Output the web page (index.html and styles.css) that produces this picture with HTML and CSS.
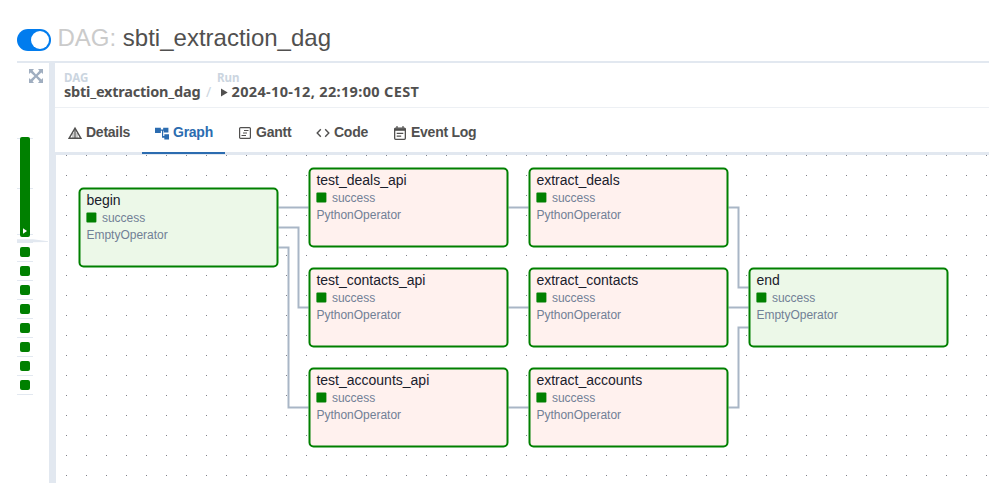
FILE: index.html
```html
<!DOCTYPE html>
<html lang="en">
<head>
<meta charset="utf-8">
<title>sbti_extraction_dag</title>
<link rel="stylesheet" href="styles.css">
</head>
<body>
<header class="page-header">
  <span class="switch"><span class="knob"></span></span>
  <h1><span class="muted">DAG:</span> sbti_extraction_dag</h1>
</header>
<div class="main">
  <aside class="runs">
    <svg class="expand" width="14" height="14" viewBox="0 0 14 14" fill="#a0aec0"><path d="M0 0h5L3.6 1.7 7 5.6 10.4 1.7 9 0h5v5l-1.6-1.4L8.6 7l3.8 3.4L14 9v5H9l1.4-1.7L7 8.4l-3.4 3.9L5 14H0V9l1.6 1.4L5.4 7 1.6 3.6 0 5z"/></svg>
    <div class="chart">
      <div class="bar"><svg width="4" height="6" viewBox="0 0 4 6"><path d="M0 0.3 4 3 0 5.7z" fill="#fff"/></svg></div>
    </div>
    <svg class="taper" width="31" height="5" viewBox="0 0 31 5"><path d="M0 0.2H16L31 2.3V3L16 3.2V4H0z" fill="#e2e8f0"/></svg>
    <ul class="tasks">
      <li></li><li></li><li></li><li></li><li></li><li></li><li></li><li></li>
    </ul>
  </aside>
  <section class="panel">
    <nav class="crumbs">
      <div class="crumb dag"><span class="label">DAG</span><span class="value">sbti_extraction_dag</span></div>
      <span class="slash">/</span>
      <div class="crumb run"><span class="label">Run</span><span class="value"><svg width="8" height="9" viewBox="0 0 8 9"><path d="M1 0.5 7.7 4.5 1 8.5z" fill="#51504f"/></svg><span class="date">2024-10-12, 22:19:00 CEST</span></span></div>
    </nav>
    <div class="tabs">
      <div class="tab details"><svg width="14" height="14" viewBox="0 0 14 14" fill="none" stroke="#51504f" stroke-width="1.4"><path d="M7 2.2 12.8 12.2H1.2z"/><path d="M7 3v9" stroke-width="1.3"/><path d="M5 7v5M9 7v5" stroke-width=".6"/></svg><span>Details</span></div>
      <div class="tab graph active"><svg width="14" height="14" viewBox="0 0 24 24" fill="#2b6cb0"><path d="M23 11V3h-9v3H10V3H0v9h10V8h2v12h4v3h8v-9h-8v3h-2V8h1v3z"/></svg><span>Graph</span></div>
      <div class="tab gantt"><svg width="12" height="12" viewBox="0 0 12 12" fill="none" stroke="#51504f" stroke-width="1.2"><rect x=".6" y=".6" width="10.8" height="10.8" rx="1"/><path d="M5 3.5h4.5M4 6h4M2.5 8.5H7" stroke-width="1.1"/></svg><span>Gantt</span></div>
      <div class="tab code"><svg width="14" height="10" viewBox="0 0 14 10" fill="none" stroke="#51504f" stroke-width="1.4"><path d="M4.8 1.3 1.2 5l3.6 3.7M9.2 1.3 12.8 5 9.2 8.7"/></svg><span>Code</span></div>
      <div class="tab log"><svg width="12" height="14" viewBox="0 0 12 14" fill="none" stroke="#51504f" stroke-width="1.3"><rect x=".65" y="2.1" width="10.7" height="11.2" rx="1"/><path d="M.7 3.6h10.6" stroke-width="2.4"/><path d="M3 0v2M9 0v2M2.7 7.4h6.6M2.7 10.2h4.5" stroke-width="1.2"/></svg><span>Event Log</span></div>
    </div>
    <div class="canvas">
      <svg class="edges" width="933" height="328" viewBox="56 155 933 328" fill="none" stroke="#a0aec0" stroke-opacity=".9" stroke-width="2">
        <path d="M278.5 207.5h30M278.5 227.5h20v80h10M278.5 247.5h10v160h20M508.5 207.5h20M508.5 307.5h20M508.5 407.5h20M728.5 207.5h10v80h10M728.5 307.5h20M728.5 407.5h10v-80h10"/>
      </svg>
      <article class="node empty begin"><h2>begin</h2><p class="state">success</p><p>EmptyOperator</p></article>
      <article class="node test row1"><h2>test_deals_api</h2><p class="state">success</p><p>PythonOperator</p></article>
      <article class="node test row2"><h2>test_contacts_api</h2><p class="state">success</p><p>PythonOperator</p></article>
      <article class="node test row3"><h2>test_accounts_api</h2><p class="state">success</p><p>PythonOperator</p></article>
      <article class="node extract row1"><h2>extract_deals</h2><p class="state">success</p><p>PythonOperator</p></article>
      <article class="node extract row2"><h2>extract_contacts</h2><p class="state">success</p><p>PythonOperator</p></article>
      <article class="node extract row3"><h2>extract_accounts</h2><p class="state">success</p><p>PythonOperator</p></article>
      <article class="node empty end row2"><h2>end</h2><p class="state">success</p><p>EmptyOperator</p></article>
    </div>
  </section>
</div>
</body>
</html>
```
FILE: styles.css
```css
* { box-sizing: border-box; }
body {
  margin: 0;
  height: 483px;
  overflow: hidden;
  background: #fff;
  color: #51504f;
  font-family: "Liberation Sans", Arial, sans-serif;
}
h1, h2, p, ul { margin: 0; padding: 0; font-weight: 400; }
svg { display: block; flex: none; }

.page-header {
  display: flex;
  align-items: flex-start;
  height: 63px;
  margin-left: 17px;
  border-bottom: 2px solid #e2e8f0;
}
.switch {
  width: 34px;
  height: 22px;
  margin-top: 29px;
  padding: 2px;
  border-radius: 11px;
  background: #017cee;
}
.knob {
  display: block;
  width: 18px;
  height: 18px;
  margin-left: 12px;
  border-radius: 50%;
  background: #fff;
}
h1 { margin: 24px 0 0 6.5px; font-size: 24px; line-height: 28px; white-space: nowrap; }
.muted { color: #cbcbcb; }

.main { display: flex; height: 420px; margin-left: 17px; }
.runs { width: 32px; flex: none; }
.expand { margin: 6px 0 0 12.4px; }
.chart {
  width: 16px;
  height: 101px;
  margin-top: 54px;
  padding: 0 3px;
  background:
    linear-gradient(#e2e8f0, #e2e8f0) 0 1px / 16px 1px no-repeat,
    linear-gradient(#e2e8f0, #e2e8f0) 0 51px / 16px 1px no-repeat,
    linear-gradient(#e2e8f0, #e2e8f0) 0 97px / 16px 1px no-repeat;
}
.bar {
  display: flex;
  align-items: flex-end;
  height: 100px;
  padding: 0 0 3px 3px;
  border-radius: 2px;
  background: #008000;
}
.taper { margin-top: 1px; }
.tasks { width: 16px; margin-top: -1px; list-style: none; }
.tasks li { height: 19px; padding: 4px 3px; border-bottom: 1px solid #e2e8f0; }
.tasks li::before {
  content: "";
  display: block;
  height: 10px;
  border-radius: 2px;
  background: #008000;
}

.panel { flex: 1; border-left: 6px solid #e2e8f0; }
.crumbs {
  display: flex;
  height: 45px;
  padding: 8px 0 0 9px;
  border-bottom: 1px solid #edf0f4;
  font-family: "Noto Sans", sans-serif;
  font-weight: 700;
}
.crumb { display: flex; flex-direction: column; white-space: nowrap; }
.dag { width: 137px; }
.label { height: 13px; color: #cbd5e0; font-size: 11.5px; line-height: 13px; }
.value { display: flex; align-items: center; font-size: 14.5px; line-height: 14px; }
.dag .value { letter-spacing: -.22px; }
.slash { width: 16px; padding: 12px 0 0 5px; color: #cbd5e0; font-size: 14px; line-height: 17px; font-weight: 400; }
.run .value { padding-left: 3px; }
.run svg { margin-top: 2px; }
.date { margin-left: 3.5px; letter-spacing: .35px; }

.tabs {
  display: flex;
  height: 46px;
  border-bottom: 2px solid #e2e8f0;
  font-size: 14px;
  font-weight: 700;
}
.tab { display: flex; align-items: center; height: 46px; padding-bottom: 0; border-bottom: 2px solid transparent; white-space: nowrap; }
.tab span { margin: 4px 0 0 4px; line-height: 16px; letter-spacing: -.25px; }
.tab svg { margin-top: 5px; }
.details { width: 87px; padding-left: 13px; }
.graph { width: 83px; padding-left: 13px; color: #2b6cb0; border-color: #2b6cb0; }
.gantt { width: 78px; padding-left: 14px; }
.code { width: 76px; padding-left: 13px; }
.log { padding-left: 15px; }
.gantt span, .log span { margin-left: 5px; }

.canvas {
  position: relative;
  height: 329px;
  border: solid #e2e8f0;
  border-width: 1px 0 0 1px;
  background-image: conic-gradient(at 1px 1px, transparent 75%, #81818a 0);
  background-size: 20px 20px;
  background-position: 10px 0;
}
.edges { position: absolute; left: 0; top: 0; }
.node { position: absolute; z-index: 0; width: 200px; height: 80px; padding: 5px 8px 0 8.4px; }
.node::before {
  content: "";
  position: absolute;
  z-index: -1;
  inset: 0;
  border: 2px solid #008000;
  border-radius: 5px;
  background: #fff1ee;
  transform: translate(.5px, .5px);
}
.empty::before { background: #ecf8e8; }
.begin { left: 22px; top: 32px; }
.test { left: 252px; }
.extract { left: 472px; }
.end { left: 692px; }
.row1 { top: 12px; }
.row2 { top: 112px; }
.row3 { top: 212px; }
.node h2 { color: #1a202c; font-size: 14px; line-height: 16px; }
.node p { color: #718096; font-size: 12px; line-height: 17px; }
.node .state { display: flex; align-items: center; gap: 5.5px; height: 18px; margin-top: 1px; }
.state::before {
  content: "";
  width: 10px;
  height: 10px;
  border-radius: 1px;
  background: #008000;
  transform: translate(.4px, -.5px);
}
```
